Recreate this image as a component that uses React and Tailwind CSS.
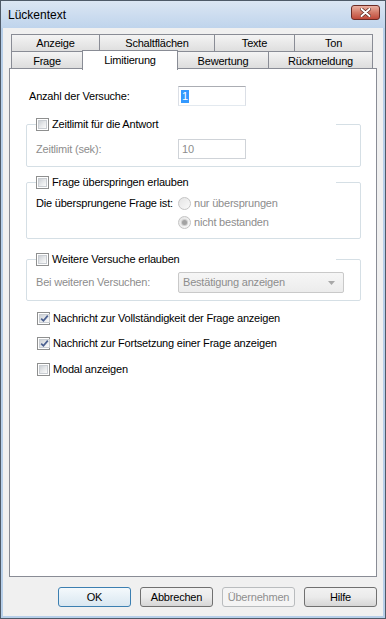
import React from 'react';

function Check({ checked }) {
  return (
    <span className="w-[13px] h-[13px] shrink-0 border border-[#8e8f8f] bg-white p-px flex">
      <span className="flex-1 flex items-center justify-center bg-linear-to-br from-[#cdd1d6] via-[#e6e8ea] to-[#fbfbfb] border border-[#c9cdd2]">
        {checked && (
          <svg width="9" height="9" viewBox="0 0 9 9">
            <path d="M1.2 4.6 L3.4 6.8 L7.8 1.6" fill="none" stroke="#4a5f8f" strokeWidth="1.7" />
          </svg>
        )}
      </span>
    </span>
  );
}

function Radio({ on }) {
  return (
    <span className="w-[13px] h-[13px] shrink-0 rounded-full border border-[#c4c4c4] bg-linear-to-br from-[#e4e4e4] to-[#fafafa] flex items-center justify-center">
      {on && <span className="w-[5px] h-[5px] rounded-full bg-[#a3a3a3] ring-1 ring-[#cfcfcf]" />}
    </span>
  );
}

function Tab({ w, first, children, className = '' }) {
  return (
    <div
      className={`${w} ${first ? '' : '-ml-px'} h-full border border-b-0 border-[#898c95] bg-linear-to-b from-[#f4f4f4] to-[#dddddd] flex items-center justify-center ${className}`}
    >
      {children}
    </div>
  );
}

function Btn({ children, variant }) {
  const styles = {
    def: 'border-[#3c7fb1] bg-linear-to-b from-[#f4f9fc] to-[#d9e7f1] text-black',
    off: 'border-[#b9bcbe] bg-[#f4f4f4] text-[#8f8f8f]',
    std: 'border-[#707070] bg-linear-to-b from-[#f2f2f2] via-[#ebebeb] to-[#d6d6d6] text-black',
  };
  return (
    <div className={`w-[73px] h-[20px] rounded-[3px] border flex items-center justify-center ${styles[variant || 'std']}`}>
      {children}
    </div>
  );
}

function Group({ label, children, className = '' }) {
  return (
    <fieldset className={`w-[335px] border border-[#d5dfe5] rounded-[2px] pl-[9px] pr-[8px] ${className}`}>
      <legend className="w-[300px] h-[14px] flex items-center gap-[3px] text-black bg-white">
        <Check />
        <span>{label}</span>
      </legend>
      {children}
    </fieldset>
  );
}

export default function App() {
  return (
    <div className="w-[386px] h-[619px] flex flex-col border border-[#4e5a68] bg-[#b7cfe9] px-[2px] pb-[2px] font-['Liberation_Sans',Arial,sans-serif] text-[11px] leading-[13px] tracking-[-0.2px] overflow-hidden">
      <div className="-mx-[2px] h-[27px] shrink-0 flex justify-between bg-linear-to-b from-[#dbe6f3] to-[#bfd4ec]">
        <span className="pl-[7px] pt-[7px] text-[12px] leading-[14px] tracking-normal text-black">Lückentext</span>
        <div className="mt-[4px] mr-[5px] w-[29px] h-[15px] rounded-[3px] border border-[#6b2b25] bg-linear-to-b from-[#eab1a3] via-[#d37a68] to-[#c0493a] flex items-center justify-center">
          <svg width="11" height="9" viewBox="0 0 11 9">
            <path d="M1.5 1 L9.5 8 M9.5 1 L1.5 8" stroke="#5a231d" strokeWidth="3.4" strokeLinecap="round" />
            <path d="M1.5 1 L9.5 8 M9.5 1 L1.5 8" stroke="#ffffff" strokeWidth="2" strokeLinecap="round" />
          </svg>
        </div>
      </div>

      <div className="flex-1 bg-[#f0f0f0] flex flex-col pt-[6px] pl-[6px] pr-[6px] text-black">
        <div className="w-[368px]">
          <div className="h-[18px] flex pl-[2px]">
            <Tab w="w-[89px]" first>Anzeige</Tab>
            <Tab w="w-[116px]">Schaltflächen</Tab>
            <Tab w="w-[81px]">Texte</Tab>
            <Tab w="w-[79px]">Ton</Tab>
          </div>
          <div className="h-[17px] flex items-start pl-[2px] -mt-px">
            <Tab w="w-[72px]" first className="pt-[3px] h-[18px]">Frage</Tab>
            <div className="-ml-px -mt-[1px] w-[96px] h-[20px] relative z-10 border border-b-0 border-[#898c95] bg-white flex items-center justify-center">
              Limitierung
            </div>
            <Tab w="w-[92px]" className="pt-[3px] h-[18px]">Bewertung</Tab>
            <Tab w="w-[105px]" className="pt-[3px] h-[18px]">Rückmeldung</Tab>
          </div>
          <div className="h-[509px] border border-[#898c95] bg-white pl-[16px] flex flex-col">
            <div className="mt-[17px] ml-[3px] flex items-center">
              <span className="w-[149px]">Anzahl der Versuche:</span>
              <div className="w-[68px] h-[20px] border border-[#abadb3] border-b-[#e3e9ef] border-x-[#dbdfe6] bg-white flex items-center pl-[2px]">
                <span className="bg-[#3399ff] text-white leading-[13px] px-px">1</span>
              </div>
            </div>

            <Group label="Zeitlimit für die Antwort" className="mt-[11px] pb-[7px]">
              <div className="mt-[8px] flex items-center text-[#8d8d8d]">
                <span className="w-[142px]">Zeitlimit (sek):</span>
                <div className="w-[68px] h-[20px] border border-[#cfd3d8] bg-white flex items-center pl-[3px] text-[#8d8d8d]">10</div>
              </div>
            </Group>

            <Group label="Frage überspringen erlauben" className="mt-[8px] pb-[9px]">
              <div className="mt-[8px] flex">
                <span className="w-[142px]">Die übersprungene Frage ist:</span>
                <div className="flex flex-col gap-[6px] text-[#8d8d8d]">
                  <div className="flex items-center gap-[3px]">
                    <Radio />
                    <span>nur übersprungen</span>
                  </div>
                  <div className="flex items-center gap-[3px]">
                    <Radio on />
                    <span>nicht bestanden</span>
                  </div>
                </div>
              </div>
            </Group>

            <Group label="Weitere Versuche erlauben" className="mt-[13px] pb-[7px]">
              <div className="mt-[6px] flex items-center text-[#8d8d8d]">
                <span className="w-[142px]">Bei weiteren Versuchen:</span>
                <div className="w-[166px] h-[21px] rounded-[2px] border border-[#c9c9c9] bg-linear-to-b from-[#f6f6f6] to-[#ececec] flex items-center justify-between pl-[4px] pr-[8px]">
                  <span>Bestätigung anzeigen</span>
                  <svg width="7" height="4" viewBox="0 0 7 4">
                    <path d="M0 0 L7 0 L3.5 4 Z" fill="#a8a8a8" />
                  </svg>
                </div>
              </div>
            </Group>

            <div className="mt-[11px] ml-[11px] flex flex-col gap-[12px]">
              <div className="flex items-center gap-[3px]">
                <Check checked />
                <span>Nachricht zur Vollständigkeit der Frage anzeigen</span>
              </div>
              <div className="flex items-center gap-[3px]">
                <Check checked />
                <span>Nachricht zur Fortsetzung einer Frage anzeigen</span>
              </div>
              <div className="flex items-center gap-[3px] mt-px">
                <Check />
                <span>Modal anzeigen</span>
              </div>
            </div>
          </div>
        </div>

        <div className="mt-[10px] flex justify-end gap-[9px]">
          <Btn variant="def">OK</Btn>
          <Btn>Abbrechen</Btn>
          <Btn variant="off">Übernehmen</Btn>
          <Btn>Hilfe</Btn>
        </div>
      </div>
    </div>
  );
}
